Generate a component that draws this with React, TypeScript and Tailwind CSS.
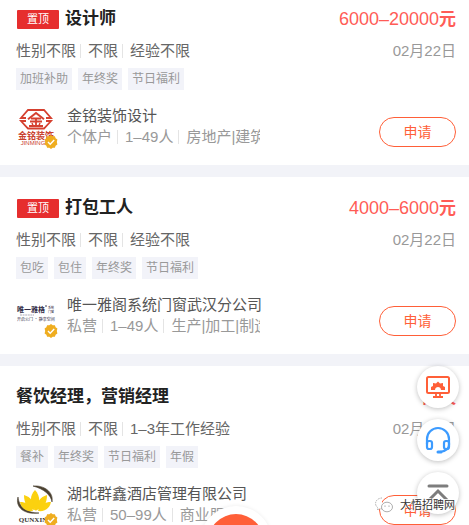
import React from "react";

type Job = {
  title: string;
  pinned?: boolean;
  salary: string;
  unit: string;
  date: string;
  needs: string[];
  tags: string[];
  company: string;
  facts: string[];
  logo: React.ReactNode;
};

function JinmingLogo() {
  return (
    <svg viewBox="0 0 40 40" className="size-10" role="img" aria-label="金铭装饰">
      <g fill="none" stroke="#d5402f">
        <path d="M10 11H5l7-8h16l7 8h-5" strokeWidth="1.8" />
        <path d="M10 14H5l7 7.5h16l7-7.5h-5" strokeWidth="1.8" />
        <path d="M12 12.200 20 6l8 6.200" strokeWidth="2" />
        <path d="M15 11.500h10M14 14.500h12M13 19h14M20 11v8" strokeWidth="1.8" />
        <path d="m16 16 1 2.500M24 16l-1 2.500" strokeWidth="1.4" />
      </g>
      <text x="20" y="32" textAnchor="middle" fontSize="9" fontWeight="700" fill="#c9422f" fontFamily="Noto Sans CJK SC">金铭装饰</text>
      <text x="17" y="38" textAnchor="middle" fontSize="6" fill="#c9422f" fontFamily="Liberation Sans">JINMING</text>
    </svg>
  );
}

function WeiyiLogo() {
  return (
    <svg viewBox="0 0 40 40" className="size-10" role="img" aria-label="唯一雅格">
      <g fontFamily="Noto Sans CJK SC" fill="#2f2b45">
        <text x="1" y="16" fontSize="7" fontWeight="700">唯一雅格</text>
        <text x="32" y="13" fontSize="3">系统</text>
        <text x="32" y="17" fontSize="3">门窗</text>
        <text x="1" y="25" fontSize="4">开启公门 · 静享空间</text>
      </g>
      <path d="M4 19h14" stroke="#8b889b" strokeWidth="0.7" strokeDasharray="2 0.6" />
      <circle cx="30" cy="10" r="0.8" fill="#2f2b45" />
    </svg>
  );
}

function QunxinLogo() {
  return (
    <svg viewBox="0 0 40 40" className="size-10" role="img" aria-label="群鑫">
      <path d="M17 1C28 0 38 7 36 17 35 10 28 4 17 1Z" fill="#4a4030" stroke="#4a4030" strokeWidth="0.6" />
      <path d="M2 12C-1 22 8 30 23 28 12 28 3 23 2 12Z" fill="#4a4030" stroke="#4a4030" strokeWidth="0.6" />
      <g fill="#fbd10f">
        <path d="M19 5c5 5 6 14 1 21-6-7-7-15-1-21Z" />
        <path d="M8 10c7 2 10 7 11 15-8-1-11-7-11-15ZM31 10c-7 2-10 7-11 15 8-1 11-7 11-15Z" />
        <path d="M4 17c6 0 11 3 13 9-7 1-12-3-13-9ZM35 17c-6 0-11 3-13 9 7 1 12-3 13-9Z" />
      </g>
      <text x="17" y="37" textAnchor="middle" fontSize="7" fontWeight="700" fill="#3c3831" fontFamily="Liberation Serif">QUNXIN</text>
    </svg>
  );
}

function VerifiedMark() {
  return (
    <svg viewBox="0 0 14 14" className="absolute -right-0.5 -bottom-0.5 size-3.5" aria-hidden="true">
      <path d="m7 0 1.7 1.3 2.2-.1.7 2.1 1.8 1.2L12.8 7l.6 2.5-1.8 1.2-.7 2.1-2.2-.1L7 14l-1.7-1.3-2.2.1-.7-2.1L.6 9.500 1.2 7 .6 4.500l1.8-1.2.7-2.1 2.2.1Z" fill="#efad1f" />
      <path d="m4 7 2.2 2.2L10.2 5" fill="none" stroke="#fff" strokeWidth="1.4" />
    </svg>
  );
}

const jobs: Job[] = [
  {
    title: "设计师",
    pinned: true,
    salary: "6000–20000",
    unit: "元",
    date: "02月22日",
    needs: ["性别不限", "不限", "经验不限"],
    tags: ["加班补助", "年终奖", "节日福利"],
    company: "金铭装饰设计",
    facts: ["个体户", "1–49人", "房地产|建筑"],
    logo: <JinmingLogo />,
  },
  {
    title: "打包工人",
    pinned: true,
    salary: "4000–6000",
    unit: "元",
    date: "02月22日",
    needs: ["性别不限", "不限", "经验不限"],
    tags: ["包吃", "包住", "年终奖", "节日福利"],
    company: "唯一雅阁系统门窗武汉分公司",
    facts: ["私营", "1–49人", "生产|加工|制造"],
    logo: <WeiyiLogo />,
  },
  {
    title: "餐饮经理，营销经理",
    salary: "",
    unit: "面议",
    date: "02月22日",
    needs: ["性别不限", "不限", "1–3年工作经验"],
    tags: ["餐补", "年终奖", "节日福利", "年假"],
    company: "湖北群鑫酒店管理有限公司",
    facts: ["私营", "50–99人", "商业服务"],
    logo: <QunxinLogo />,
  },
];

function Divided({ items, ruleClass }: { items: string[]; ruleClass: string }) {
  return (
    <>
      {items.map((item, i) => (
        <React.Fragment key={item}>
          {i > 0 && <span className={`${ruleClass} h-3.5 w-px shrink-0 bg-[#e4e4e4]`} />}
          <span className="shrink-0">{item}</span>
        </React.Fragment>
      ))}
    </>
  );
}

function JobCard({ job }: { job: Job }) {
  return (
    <article className="bg-white pt-[19px] pr-[13px] pb-4 pl-4 first:pt-[7px]">
      <div className="flex h-6 items-center">
        {job.pinned && (
          <span className="mr-1.5 ml-px flex h-[19px] w-[42px] items-center justify-center rounded-[1px] bg-[#e62e2e] text-[11px] text-white">
            置顶
          </span>
        )}
        <h2 className="text-[17px] leading-6 font-bold text-[#222]">{job.title}</h2>
        <p className="ml-auto text-lg leading-6 text-[#ff5c56]">
          {job.salary}
          <span className="text-[17px] font-bold">{job.unit}</span>
        </p>
      </div>
      <div className="mt-2 flex h-6 items-center text-[15px] text-[#666]">
        <Divided items={job.needs} ruleClass="mr-[7px] ml-1" />
        <time className="ml-auto text-[#999]">{job.date}</time>
      </div>
      <ul className="mt-[5px] flex gap-1.5">
        {job.tags.map((tag) => (
          <li key={tag} className="bg-[#f2f3f9] px-1 text-xs leading-[22px] text-[#999]">
            {tag}
          </li>
        ))}
      </ul>
      <div className="mt-[15px] flex h-11 items-center">
        <div className="relative size-10 shrink-0">
          {job.logo}
          <VerifiedMark />
        </div>
        <div className="mb-0.5 ml-[11px] w-[193px] text-[15px] leading-[21px] whitespace-nowrap">
          <h3 className="text-[#555]">{job.company}</h3>
          <p className="flex items-center overflow-hidden text-[#999]">
            <Divided items={job.facts} ruleClass="mr-[7px] ml-[5px]" />
          </p>
        </div>
        <button
          type="button"
          className="mt-2.5 ml-auto h-[30px] w-[77px] rounded-full border border-[#ff5f38] text-sm text-[#ff5f38]"
        >
          申请
        </button>
      </div>
    </article>
  );
}

function FloatingButton({ label, children }: { label: string; children: React.ReactNode }) {
  return (
    <button
      type="button"
      aria-label={label}
      className="flex size-[42px] items-center justify-center rounded-full bg-white shadow-[0_1px_5px_rgba(0,0,0,0.25)]"
    >
      {children}
    </button>
  );
}

export default function App() {
  return (
    <div className="relative h-screen overflow-hidden bg-[#f2f3f8] font-['Liberation_Sans','Noto_Sans_CJK_SC',sans-serif]">
      <main className="flex flex-col gap-3">
        {jobs.map((job) => (
          <JobCard key={job.title} job={job} />
        ))}
      </main>

      <div className="absolute inset-x-0 -bottom-[53px] flex justify-center pr-[13px] pl-4">
        <button
          type="button"
          aria-label="发布"
          className="flex size-[72px] items-center justify-center rounded-full bg-white shadow-[0_0_4px_rgba(0,0,0,0.08)]"
        >
          <span className="size-14 rounded-full bg-[#ff5f38]" />
        </button>
      </div>

      <div className="absolute right-2.5 bottom-[11px] flex flex-col gap-[11px]">
        <FloatingButton label="电脑版">
          <svg viewBox="0 0 26 24" className="h-6 w-[26px]" fill="none" stroke="#ff5f38">
            <rect x="2" y="2" width="22" height="16" rx="1.5" strokeWidth="2" />
            <path d="M11 18v4M15 18v4M8 22h10" strokeWidth="1.8" />
            <path
              d="M6 15v-3l2-1V8l3 .5L13 6.500l2 2 3-.5v3l2 1v3h-4c0-4-6-4-6 0Z"
              fill="#ff5f38"
              stroke="none"
            />
          </svg>
        </FloatingButton>
        <FloatingButton label="客服">
          <svg viewBox="0 0 28 30" className="h-[30px] w-7" fill="none" stroke="#3c9bff" strokeWidth="2.2" strokeLinecap="round">
            <path d="M3 19v-5a11 11 0 0 1 22 0v6c0 4-3 6-9 7" />
            <rect x="3" y="16" width="5" height="8" rx="2" />
            <rect x="20" y="16" width="5" height="8" rx="2" />
            <path d="M14 27h3" strokeWidth="3" />
          </svg>
        </FloatingButton>
        <FloatingButton label="回到顶部">
          <svg viewBox="0 0 24 20" className="h-5 w-6" fill="none" stroke="#7d7d7d" strokeWidth="3" strokeLinecap="round">
            <path d="M3 3h18M3 17l9-9 9 9" />
          </svg>
        </FloatingButton>
      </div>

      <div className="absolute right-3.5 bottom-3 flex items-center gap-1.5">
        <svg viewBox="0 0 20 16" className="h-4 w-5" fill="#fff" stroke="#999" strokeWidth="0.8" strokeDasharray="1.5 1" aria-hidden="true">
          <path d="M8 1a6.500 5.500 0 0 0-4 9.800L3.500 13l2.300-1.200H8" />
          <ellipse cx="13" cy="10" rx="5.500" ry="4.800" strokeDasharray="0" />
          <path d="M11 8.700v.8M15 8.700v.8" stroke="#444" />
        </svg>
        <span className="text-[11px] leading-4 text-[#333] [text-shadow:0_0_1px_#fff,1px_1px_0_#fff,-1px_-1px_0_#fff]">
          大悟招聘网
        </span>
      </div>
    </div>
  );
}
